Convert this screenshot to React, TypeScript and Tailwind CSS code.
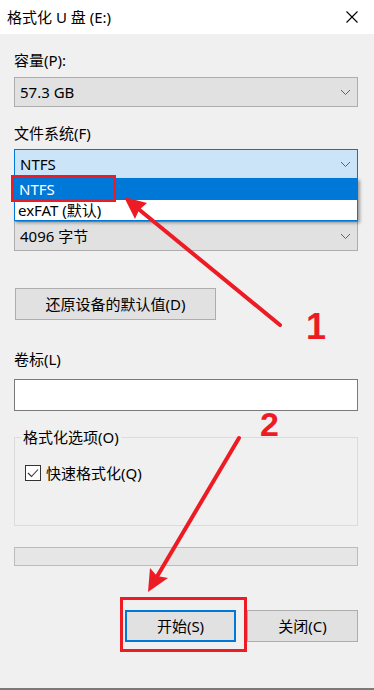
import React from "react";

const Chevron = () => (
  <svg width="11" height="7" viewBox="0 0 11 7" className="shrink-0">
    <path d="M1 1 L5.5 5.5 L10 1" fill="none" stroke="#606060" strokeWidth="1" />
  </svg>
);

const Select = ({ value, active }: { value: string; active?: boolean }) => (
  <div
    className={
      active
        ? "flex h-[30px] items-center justify-between border border-[#0078d7] bg-[#cce4f7] pl-[5px] pr-[6px]"
        : "flex h-[30px] items-center justify-between border border-[#adadad] bg-[#e1e1e1] pl-[5px] pr-[6px]"
    }
  >
    <span>{value}</span>
    <Chevron />
  </div>
);

const Label = ({ text, className }: { text: string; className?: string }) => (
  <div className={"h-[20px] leading-[20px] " + (className ?? "")}>{text}</div>
);

const Annotations = () => (
  <svg
    width="374"
    height="690"
    viewBox="0 0 374 690"
    className="pointer-events-none absolute left-0 top-0 z-20"
  >
    <rect x="12.5" y="176.5" width="102" height="24" fill="none" stroke="#ed1c24" strokeWidth="3" />
    <rect x="121.5" y="598.5" width="124" height="52" fill="none" stroke="#ed1c24" strokeWidth="3" />
    <line x1="280" y1="325" x2="136" y2="207" stroke="#ed1c24" strokeWidth="4" strokeLinecap="round" />
    <polygon points="124,197 147,203 139,210 135,219" fill="#ed1c24" />
    <line x1="239" y1="438" x2="155" y2="580" stroke="#ed1c24" strokeWidth="4" strokeLinecap="round" />
    <polygon points="148,592 150,568 157,576 168,578" fill="#ed1c24" />
    <text x="306" y="339" fill="#ed1c24" fontSize="36" fontWeight="bold" fontFamily="Liberation Sans, sans-serif">
      1
    </text>
    <text x="260" y="436" fill="#ed1c24" fontSize="34" fontWeight="bold" fontFamily="Liberation Sans, sans-serif">
      2
    </text>
  </svg>
);

export default function App() {
  return (
    <div className="relative h-[690px] w-[374px] overflow-hidden bg-[#f0f0f0] font-['Noto_Sans','Noto_Sans_CJK_SC',sans-serif] text-[15px] text-black">
      <div className="flex h-[34px] items-center justify-between bg-white pl-[7px] pr-[16px]">
        <span>格式化 U 盘 (E:)</span>
        <svg width="12" height="12" viewBox="0 0 12 12">
          <path d="M0.5 0.5 L11.5 11.5 M11.5 0.5 L0.5 11.5" stroke="#000" strokeWidth="1.1" />
        </svg>
      </div>

      <div className="flex flex-col pl-[14px] pr-[16px] pt-[16px]">
        <Label text="容量(P):" />
        <div className="mt-[7px]">
          <Select value="57.3 GB" />
        </div>

        <Label text="文件系统(F)" className="mt-[16px]" />
        <div className="relative mt-[6px]">
          <Select value="NTFS" active />
          <div className="absolute left-0 right-0 top-[29px] z-10 border border-[#0078d7] bg-white shadow-[2px_2px_3px_rgba(0,0,0,0.35)]">
            <div className="h-[21px] bg-[#0078d7] pl-[4px] leading-[21px] text-white">NTFS</div>
            <div className="h-[20px] pl-[3px] leading-[20px]">exFAT (默认)</div>
          </div>
        </div>

        {/* allocation unit label sits under the open list */}
        <div className="mt-[42px]">
          <Select value="4096 字节" />
        </div>

        <button className="ml-[1px] mt-[37px] h-[32px] w-[201px] border border-[#adadad] bg-[#e1e1e1] text-center">
          还原设备的默认值(D)
        </button>

        <Label text="卷标(L)" className="mt-[29px]" />
        <div className="mt-[10px] h-[32px] border border-[#7a7a7a] bg-white" />

        <fieldset className="mt-[16px] h-[99px] border border-[#dcdcdc] px-0">
          <legend className="ml-[6px] h-[20px] px-[2px] leading-[20px]">格式化选项(O)</legend>
          <div className="ml-[10px] mt-[16px] flex h-[20px] items-center gap-[5px]">
            <div className="flex h-[16px] w-[16px] items-center justify-center border border-[#333] bg-white">
              <svg width="12" height="10" viewBox="0 0 12 10">
                <path d="M1 5 L4.5 8.5 L11 1.5" fill="none" stroke="#333" strokeWidth="1.1" />
              </svg>
            </div>
            <span className="leading-[20px]">快速格式化(Q)</span>
          </div>
        </fieldset>

        <div className="mt-[21px] h-[19px] border border-[#bcbcbc] bg-[#e6e6e6]" />

        <div className="mt-[44px] flex justify-end gap-[11px]">
          <button className="h-[32px] w-[111px] border-2 border-[#0078d7] bg-[#e1e1e1]">开始(S)</button>
          <button className="h-[32px] w-[111px] border border-[#adadad] bg-[#e1e1e1]">关闭(C)</button>
        </div>
      </div>

      <div className="absolute bottom-0 left-0 h-[2px] w-full bg-[#7a7a7a]" />
      <Annotations />
    </div>
  );
}
